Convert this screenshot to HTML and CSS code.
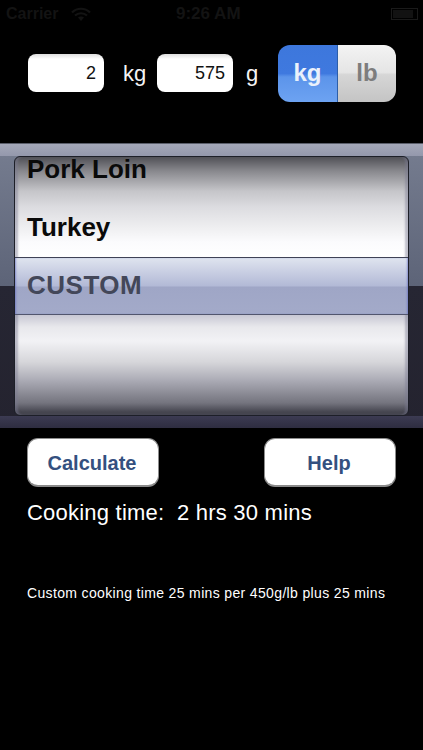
FILE: index.html
```html
<!DOCTYPE html>
<html lang="en">
<head>
<meta charset="utf-8">
<title>Cooking time</title>
<link rel="stylesheet" href="styles.css">
</head>
<body>
<div class="status">
  <div class="status-left">
    <span>Carrier</span>
    <svg class="wifi" width="20" height="14" viewBox="0 0 20 14"><path d="M1 5.500C6 .5 14 .5 19 5.500M4 8.500C7.500 5.500 12.500 5.500 16 8.500" fill="none" stroke="#131313" stroke-width="2.200"/><path d="M7 10.500Q10 8.500 13 10.500L10 14Z" fill="#131313"/></svg>
  </div>
  <span class="clock">9:26 AM</span>
  <div class="battery"><div class="battery-fill"></div></div>
</div>
<div class="weight-row">
  <div class="field">2</div>
  <span class="unit unit-kg">kg</span>
  <div class="field">575</div>
  <span class="unit unit-g">g</span>
  <div class="segmented">
    <div class="seg seg-on">kg</div>
    <div class="seg seg-off">lb</div>
  </div>
</div>
<div class="picker">
  <div class="wheel">
    <div class="item item-first">Pork Loin</div>
    <div class="item">Turkey</div>
    <div class="item item-custom">CUSTOM</div>
    <div class="selection"></div>
  </div>
</div>
<div class="actions">
  <button class="btn" type="button">Calculate</button>
  <button class="btn" type="button">Help</button>
</div>
<p class="result">Cooking time:&nbsp; 2 hrs 30 mins</p>
<p class="note">Custom cooking time 25 mins per 450g/lb plus 25 mins</p>
</body>
</html>
```
FILE: styles.css
```css
* { box-sizing: border-box; }
html, body { margin: 0; height: 100%; }
body {
  width: 423px;
  height: 750px;
  overflow: hidden;
  background: #000;
  color: #fff;
  font-family: "Liberation Sans", Arial, sans-serif;
}
.status {
  height: 28px;
  padding: 0 5px 0 6px;
  display: flex;
  align-items: center;
  justify-content: space-between;
  color: #131313;
  font-size: 16px;
  font-weight: 700;
  position: relative;
}
.status-left { display: flex; align-items: center; gap: 13px; }
.wifi { display: block; }
.clock { position: absolute; left: 176px; top: 4px; font-size: 17px; }
.battery {
  width: 27px;
  height: 12px;
  border: 1px solid #1a1a1a;
  padding: 1px;
}
.battery-fill { width: 85%; height: 100%; background: #121212; }
.weight-row {
  height: 57px;
  margin-top: 17px;
  padding-left: 28px;
  display: flex;
  align-items: center;
}
.field {
  width: 76px;
  height: 38px;
  margin-top: -1px;
  border-radius: 8px;
  background: linear-gradient(#dedede 0, #fff 5px);
  color: #111;
  font-size: 18px;
  line-height: 38px;
  text-align: right;
  padding-right: 8px;
}
.unit { font-size: 22px; color: #f4f4f4; }
.unit-kg { width: 53px; padding-left: 19px; }
.unit-g { width: 45px; padding-left: 13px; }
.segmented {
  width: 118px;
  height: 57px;
  display: flex;
  border-radius: 12px;
  overflow: hidden;
  font-size: 24px;
  font-weight: 700;
  text-align: center;
  line-height: 55px;
}
.seg-on {
  width: 60px;
  color: #eaf1fb;
  background: linear-gradient(#3d77dc 0, #3f79df 50%, #5c94ea 56%, #6da3f2 100%);
  border-right: 1px solid #2c5ea8;
}
.seg-off {
  flex: 1;
  color: #7d7d7d;
  background: linear-gradient(#f3f3f3 0, #e5e5e5 48%, #d6d6d6 52%, #c4c4c4 100%);
}
.picker {
  margin-top: 41px;
  height: 285px;
  padding: 12px 14px;
  background:
    linear-gradient(#a4a8b8 0, #9498ac 12px, rgba(0,0,0,0) 12px),
    linear-gradient(rgba(0,0,0,0) 272px, #3c3b52 272px, #2e2d40 284px),
    linear-gradient(#767d90 0, #5d6478 50%, #262633 50%, #24232f 100%);
  border-top: 1px solid #5a5e6a;
}
.wheel {
  position: relative;
  height: 260px;
  overflow: hidden;
  border-radius: 6px;
  border: 1px solid #1d1f28;
  background: linear-gradient(
    #505056 0,
    #88888d 14px,
    #c5c5c9 34px,
    #dcdce0 50px,
    #eeeef0 70px,
    #fbfbfd 85px,
    #fff 100px,
    #c8c8d4 158px,
    #e8e8ec 170px,
    #f2f2f5 184px,
    #d6d6da 205px,
    #acacb6 223px,
    #74747e 246px,
    #45454f 255px);
  box-shadow: inset 4px 0 2px -1px rgba(120,120,145,.45), inset -4px 0 2px -1px rgba(120,120,145,.45);
  color: #0a0a0a;
  font-size: 26px;
  font-weight: 700;
}
.item {
  height: 58px;
  line-height: 58px;
  padding-left: 12px;
}
.item-first { margin-top: -17px; }
.item-custom {
  position: relative;
  z-index: 1;
  color: #434759;
  letter-spacing: .5px;
}
.selection {
  position: absolute;
  left: -1px;
  right: -1px;
  top: 100px;
  height: 58px;
  background: linear-gradient(#dfe4ef 0, #b2b9d6 28px, #9fa6c6 29px, #a3aac9 100%);
  border-top: 1px solid #3f4256;
  border-bottom: 1px solid #52566e;
  box-shadow: inset 3px 0 2px -1px rgba(90,100,190,.6), inset -3px 0 2px -1px rgba(90,100,190,.6);
}
.actions {
  margin-top: 10px;
  padding: 0 27px;
  display: flex;
  justify-content: space-between;
}
.btn {
  width: 132px;
  height: 49px;
  border-radius: 11px;
  border: 1px solid #8d8d8d;
  border-bottom: 2px solid #8a8a8a;
  background: #fff;
  color: #34507f;
  font-family: inherit;
  font-size: 20px;
  font-weight: 700;
  padding: 2px 2px 0 0;
}
.result {
  margin: 12px 0 0 27px;
  font-size: 22px;
  line-height: 28px;
  letter-spacing: .22px;
}
.note {
  margin: 57px 0 0 27px;
  font-size: 14px;
  line-height: 18px;
  letter-spacing: .35px;
}
```
